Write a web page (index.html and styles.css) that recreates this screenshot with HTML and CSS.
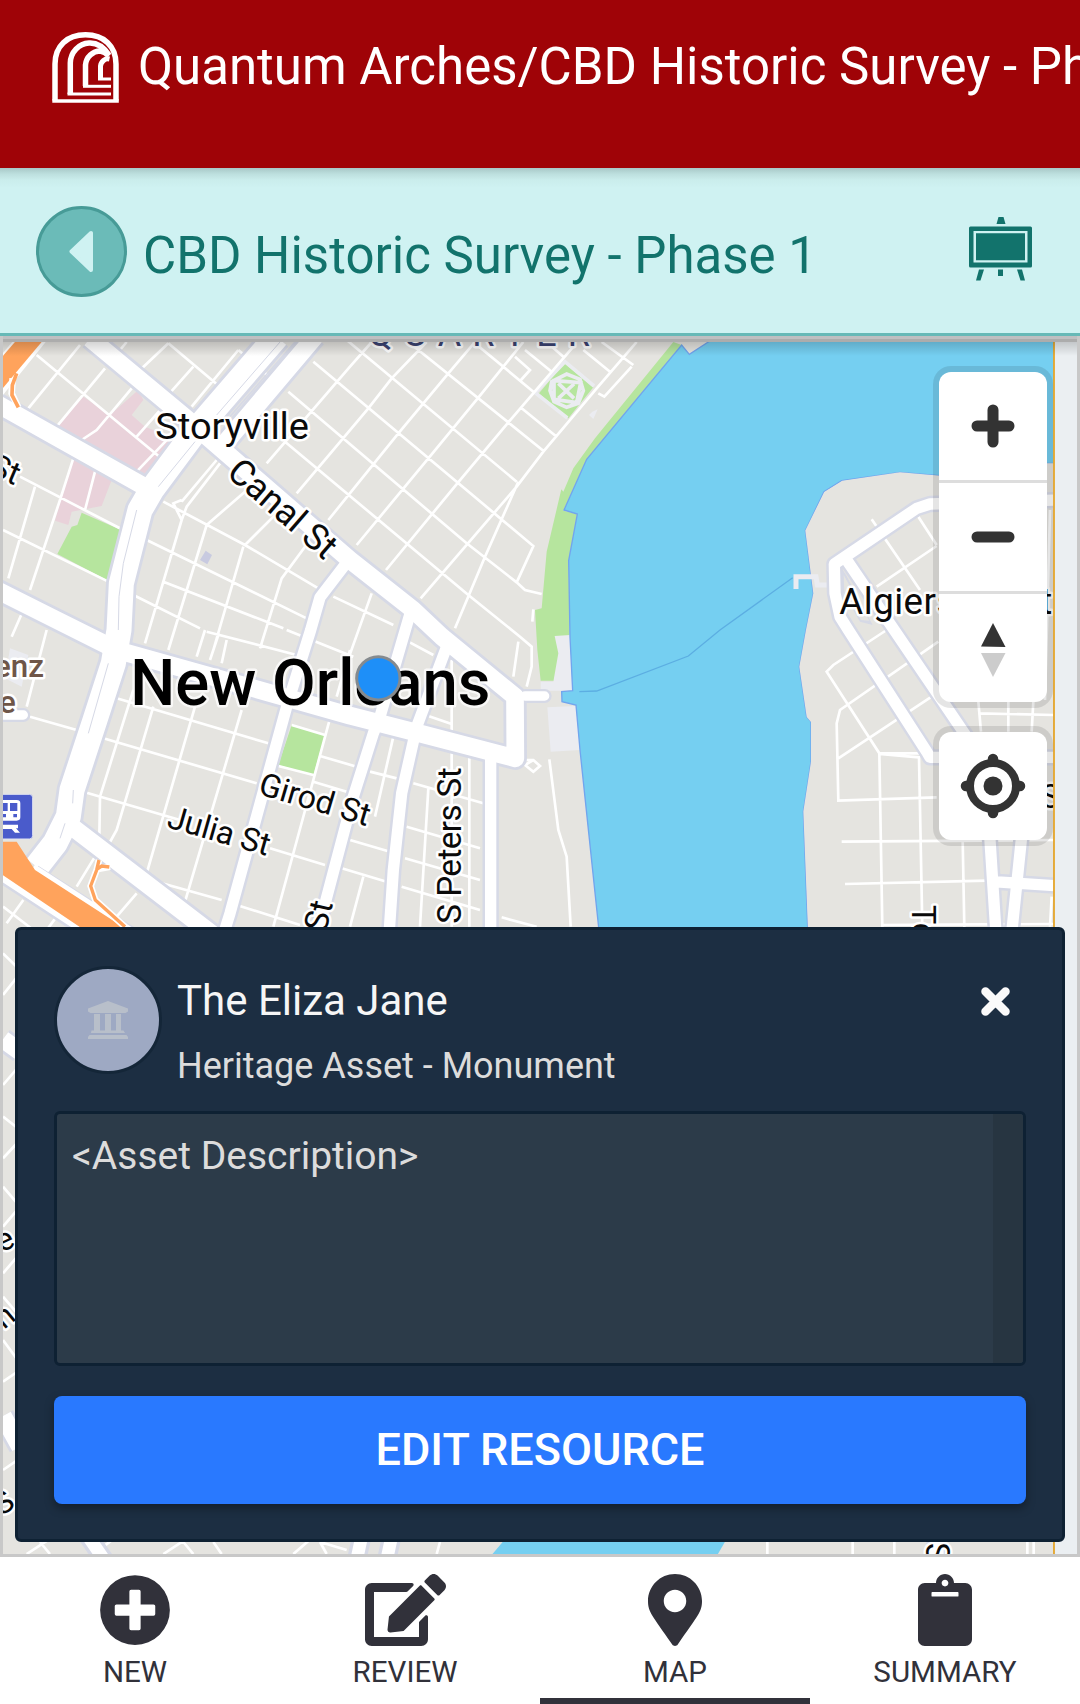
FILE: index.html
```html
<!DOCTYPE html>
<html lang="en">
<head>
<meta charset="utf-8">
<title>Quantum Arches</title>
<link rel="stylesheet" href="styles.css">
</head>
<body>
<div class="app">
  <header class="app-header">
    <svg class="logo" viewBox="0 0 67 71" aria-hidden="true">
      <path d="M3 68.5V32C3 14 15 2.800 33.500 2.800S64 14 64 32V68.500" fill="none" stroke="#fff" stroke-width="5.500"/>
      <path d="M0.300 69h66.500" stroke="#fff" stroke-width="3.500"/>
      <g fill="none" stroke="#fff">
        <path d="M18.300 62V31C18.500 20 27 11.500 37 11C46 10.500 53 17 57 23" stroke-width="5.500"/>
        <path d="M15.500 62H59" stroke-width="3"/>
        <path d="M33.500 54V33C34 25 41 19 48 19C52 19.500 55 22 57 24" stroke-width="5.500"/>
        <path d="M31 54.300H59" stroke-width="3"/>
        <path d="M48.500 47V34C49 29.500 53 26 57.500 27" stroke-width="5"/>
        <path d="M46 47H59" stroke-width="3"/>
      </g>
    </svg>
    <h1 class="app-title">Quantum Arches/CBD Historic Survey - Phase 1</h1>
  </header>

  <div class="project-bar">
    <button class="back" aria-label="Back">
      <svg viewBox="0 0 25 42"><path d="M22 2.500v37L2.500 21z" fill="#cff2f2" stroke="#cff2f2" stroke-width="4" stroke-linejoin="round"/></svg>
    </button>
    <h2 class="project-title">CBD Historic Survey - Phase 1</h2>
    <svg class="easel" viewBox="0 0 63 64" fill="#12736c" aria-hidden="true">
      <path d="M29.500 0h5l2 7h-9z"/>
      <path fill-rule="evenodd" d="M1.500 9.500h60A1.500 1.500 0 0 1 63 11v38a1.500 1.500 0 0 1-1.500 1.500h-60A1.500 1.500 0 0 1 0 49V11a1.500 1.500 0 0 1 1.500-1.500zM4.500 14v31.500h54V14z"/>
      <path d="M7 16.200h49v27H7zM10 52.500h5L11.500 63.500H7zM29 52.500h5V59h-5zM48 52.500h5L56 63.500h-4.500z"/>
    </svg>
  </div>

  <main class="map">
    <svg class="map-canvas" viewBox="9 36 3222 3636" aria-label="Map of New Orleans">
      <defs>
        <clipPath id="tile"><path d="M9 36H3160V3672H9z"/></clipPath>
        <path id="avenue" d="M270 25L555 262L1050 690L1238 838L1325 920L1545 1100L1546 1285L1250 1208L1050 1157L760 1075L350 960L160 865L-20 775M-20 215L460 485M945 20L670 345M200 1478L640 1815M9 2128L60 2165M9 3258L60 3350"/>
        <path id="loyola" d="M830 20L590 298L456 478L420 540L364 760L357 900L340 1000L285 1170L216 1380L205 1460L165 1540L110 1610"/>
        <path id="street" d="M1040 698L960 802L932 900L860 1130L690 1750L665 1830M1232 845L1140 1160L1120 1210L1060 1400L970 1740L950 1810M1340 950L1250 1190L1205 1390L1180 1620L1168 1800M1472 1270V1800M3170 510L2790 522L2750 535L2503 702L2505 790L2520 860L2545 900L2780 1265L2790 1282H3170M2540 690L2910 1235M2968 1500L2988 1810M3067 1500L3035 1810M2980 1655L3180 1668"/>
        <path id="stub" d="M1575 1098H1634M-10 1155H70"/>
      </defs>
      <rect x="3160" width="80" height="3700" fill="#ebeff2"/>
      <g clip-path="url(#tile)">
        <rect width="3240" height="3700" fill="#e5e4e0"/>
        <path fill="#e9d2da" d="M250 200L330 255L415 180L430 210L395 255L435 290L535 330L435 455L225 355L170 290zM218 385L335 450L305 528L215 545L205 585L165 572z"/>
        <path fill="#b6e59e" d="M245 548L370 603L325 752L172 672L215 590L232 585zM875 1185L975 1215L940 1335L835 1305zM1693 100L1780 172L1705 265L1617 190zM2020 36L1785 325L1720 415L1690 485L1684 478L1640 665L1625 835L1605 840L1612 960L1622 1052H1660L1710 1080L1706 692L1732 552L1690 542L1760 388L2045 45zM1562 3636L1508 3672H1645z"/>
        <path fill="#ebecf1" d="M1664 918L1710 915L1718 1082H1622V1055H1660L1675 970zM1642 1132L1728 1128L1740 1260L1652 1265zM30 955L85 975L65 1070L15 1045zM1777 245L1793 238L1780 267L1767 255z"/>
        <path fill="#c8cae0" d="M617 662L636 675L622 703L600 690z"/>
        <path fill="#75cff1" stroke="#71a5ee" stroke-width="4" d="M2125 36L2068 73L2045 45L1760 388L1692 540L1732 552L1706 692L1710 920L1718 1082L1685 1085L1686 1115L1728 1125L1740 1260L1800 1830H2425L2423 1790L2410 1445L2433 1295V1175L2420 1160L2398 1010L2418 900L2440 790L2416 602L2472 485L2525 452L2700 427L2820 437L3000 400H3180V20H2150z"/>
        <path fill="none" stroke="#e5e4e0" stroke-width="6" d="M2427 1800L2413 1445L2436 1295V1175L2423 1160L2401 1010L2421 900L2443 790L2419 602L2475 488L2528 455L2700 430L2820 440L3000 403H3180"/>
        <path fill="#75cff1" d="M1513 3630L1475 3675H2152L2178 3630z"/>
        <path fill="none" stroke="#5caee2" stroke-width="4" d="M1738 1085L1790 1083L2065 978L2160 900L2378 743"/>
        <path fill="none" stroke="#ebecf1" stroke-width="15" d="M2388 777V740H2448L2452 765H2482"/>
        <g fill="none" stroke="#ebecf1" stroke-width="11">
          <path d="M1605 188L1695 95L1782 168M1605 188L1702 264"/>
          <path d="M1655 155L1700 132L1740 148L1750 182L1735 220L1700 232L1662 215L1650 182zM1662 152L1742 158L1730 218L1662 208zM1675 160L1722 205M1722 162L1675 205"/>
        </g>
        <path class="lane" d="M110 75L490 390M240 45L85 235M315 115L170 290M395 175L290 300L245 330M505 40L665 175M505 40L410 130M580 110L500 200M715 60L575 230M715 60L745 85M380 36L360 60M485 235L410 320M510 320L410 425M770 110L815 145
          M60 440L370 600M105 470L25 745M220 385L180 510L90 780M285 425L255 540M9 600L325 755M440 630L920 865M490 515L735 645L955 775M400 795L600 895M490 755L850 895M545 570L435 940M620 585L505 960M730 650L640 960M930 630L845 745L780 955M735 485L620 585M830 550L735 645M650 390L545 515M660 400L560 530L545 570L520 520L545 510M1000 800L1180 885M1115 790L1040 1000M70 840L35 920M140 900L80 1130
          M615 900L590 980M655 915L630 990M680 930L665 1000M620 905L890 975M860 900L1060 980M1050 960L1010 1100
          M1040 30L1550 455M940 95L1600 648L1550 757M865 185L1400 640L1550 757L1575 780L1625 792M855 335L1405 795L1560 920L1595 950V1010L1580 1070M1555 935L1540 1040M1600 838L1597 875M1225 36L1630 362M1420 36L1600 185M1565 235L1670 320M1640 36L1690 80M1805 36L1900 105M1750 60L1830 125
          M800 400L1050 110L1115 36M890 490L1105 235L1175 145L1280 36M985 570L1195 310L1345 130L1425 36M1070 645L1285 385L1435 203L1570 36M1158 720L1372 460L1525 277L1720 50M1262 805L1550 470L1630 365L1790 175L1910 36M1365 895L1455 680L1555 455M1545 80L1590 120L1563 150M1575 60L1655 125M1795 190L1813 200L1895 110"/>
        <path class="lane" d="M400 1080L300 1400L298 1520M460 1130L350 1500L325 1545M585 1130L440 1630M725 1140L555 1715M345 1103L805 1240M305 1223L770 1360M260 1388L540 1470M90 1160L230 1200M470 1655L665 1710M710 1725L900 1785M810 1555L975 1605M990 1165L940 1350L820 1790M875 1185L975 1215M835 1308L940 1335M940 1355L1040 1385M960 1278L1070 1310M1050 1530L1170 1565M1025 1615L1160 1655M410 1690L350 1760M285 1580L230 1670M9 1730L100 1800M70 1710L20 1780M170 1760L140 1800
          M1180 1220L1125 1460M1110 1325L1190 1345M1240 1360L1450 1420M1285 1375L1260 1790M1220 1490L1440 1555M1215 1585L1440 1650M1205 1670L1440 1740M1355 990V1790M1408 1275V1790M1225 935L1300 975M1285 1158L1355 1182M1090 1640L1050 1790M1648 1288L1675 1500L1700 1580L1712 1790M1505 1762L1610 1790M1570 1290H1600L1620 1308L1600 1325L1575 1305L1600 1290
          M2615 568L2760 780M2630 770L2810 648M2755 560L2810 645M2660 900L2500 1005L2480 1025L2638 1270H2760M2815 935L2520 1140L2510 1180L2515 1412L2810 1402M2795 1100L2515 1285M2638 1270L2647 1790M2638 1272L2757 1282L2767 1790M2525 1535L3170 1530M2535 1662L2960 1652M2888 1530L2893 1790M2647 1785L3160 1782M2935 1115L2943 1205M3025 1115V1205M3100 1115L3095 1205M2935 1150L3160 1155M3150 540L3135 1110M3155 1700L3150 1790
          M9 1870L60 1920M9 1995L60 1930M9 2265L60 2205M9 2360L60 2400M9 2485L60 2430M9 2570L60 2630M9 2690L60 2630M9 3030L60 3100M9 3155L60 3120M9 3420L60 3385M9 2830L60 2770M9 2900L60 2960
          M80 3672L160 3620M120 3636L150 3672M310 3650L350 3620M490 3672L570 3620M550 3636L580 3672M640 3636L665 3672M880 3672L940 3620M960 3636L1040 3660M980 3672L960 3636M1320 3636L1310 3672M2302 3636V3672M2558 3636V3672M2683 3636V3672M3082 3636V3672M3101 3636V3672"/>
        <g class="casing">
          <use href="#avenue" stroke-width="70"/><use href="#loyola" stroke-width="92"/><use href="#street" stroke-width="49"/><use href="#stub" stroke-width="42" stroke-linecap="round"/>
          <path d="M258 3610L320 3700M1085 3620L1070 3690M1175 3620L1160 3690M2808 3620V3690" stroke-width="58"/>
        </g>
        <g class="road">
          <use href="#avenue" stroke-width="53"/><use href="#loyola" stroke-width="75"/><use href="#street" stroke-width="34"/><use href="#stub" stroke-width="28" stroke-linecap="round"/>
          <path d="M258 3610L320 3700M1085 3620L1070 3690M1175 3620L1160 3690M2812 3620V3690" stroke-width="38"/>
        </g>
        <path fill="none" stroke="#d6d9e6" stroke-width="3" d="M840 36L650 255M585 335L475 470M410 540L370 700L357 800L355 900M325 1000L265 1210M220 1380L218 1420M195 1480L180 1525"/>
        <path fill="none" stroke="#d6d9e6" stroke-width="5" d="M885 36L690 260"/>
        <path fill="#d6d9e6" d="M2522 710L2538 735L2618 885L2580 875L2525 780z"/>
        <path fill="#e5e4e0" d="M2531 735L2608 872L2583 870L2533 785z"/>
        <path d="M0 80L50 20H150L-5 212z" fill="#fff"/>
        <path d="M0 88L50 30H130L0 185z" fill="#ffa35c"/>
        <path d="M38 145L35 190L55 232" fill="none" stroke="#fff" stroke-width="20"/>
        <path d="M50 130L37 165L36 195L55 232" fill="none" stroke="#ffa35c" stroke-width="11"/>
        <path d="M0 1650L260 1820M110 1615L400 1800" fill="none" stroke="#d6d9e6" stroke-width="18"/>
        <path d="M0 1640L260 1810M100 1612L390 1800" fill="none" stroke="#fff" stroke-width="20"/>
        <path d="M0 1535H50L105 1620L375 1795H245L0 1630z" fill="#ffa35c"/>
        <path d="M297 1590L290 1620L272 1668L286 1710L375 1790M290 1618L330 1610" fill="none" stroke="#fff" stroke-width="20"/>
        <path d="M297 1590L290 1620L272 1668L286 1710L375 1790M290 1618L305 1608L328 1611" fill="none" stroke="#ffa35c" stroke-width="10"/>
        <g>
          <rect x="-20" y="1393" width="118" height="134" rx="10" fill="#4a5bcb" stroke="#dfe2f2" stroke-width="3"/>
          <path fill="#fff" fill-rule="evenodd" d="M0 1410H50Q61 1410 61 1420V1462Q61 1472 50 1472H0zM0 1419V1443H23V1419zM30 1419V1443H52V1419zM40 1452V1462H51V1452zM0 1452V1462H18V1452zM0 1484H54V1495H48L60 1508H45L35 1497H0z"/>
        </g>
        <g class="labels">
          <text x="466" y="327" font-size="110" textLength="461" lengthAdjust="spacingAndGlyphs">Storyville</text>
          <text transform="translate(676 434) rotate(41)" font-size="108" textLength="394">Canal St</text>
          <text transform="translate(497 1491) rotate(16)" font-size="97" textLength="315">Julia St</text>
          <text transform="translate(771 1391) rotate(16.500)" font-size="97" textLength="343">Girod St</text>
          <text transform="translate(1384 1781) rotate(-90)" font-size="100" textLength="469">S Peters St</text>
          <text transform="translate(978 1809) rotate(-77)" font-size="99">St</text>
          <text transform="translate(-38 431) rotate(23)" font-size="97">St</text>
          <text x="2518" y="852" font-size="110" textLength="639">Algiers Point</text>
          <text transform="translate(2735 1725) rotate(90)" font-size="97">Te</text>
          <text x="3122" y="1435" font-size="97">S</text>
          <text transform="translate(4 2768) rotate(-25)" font-size="95">e</text>
          <text transform="translate(12 3000) rotate(-40)" font-size="95">n</text>
          <text transform="translate(4 3560) rotate(-35)" font-size="95">S</text>
          <text transform="translate(2850 3697) rotate(-90)" font-size="97">S</text>
          <text class="district" x="1104" y="48" font-size="108" textLength="666">QUARTER</text>
          <text class="poi" x="132" y="1040" font-size="94" text-anchor="end">enz</text>
          <text class="poi" x="47" y="1150" font-size="94" text-anchor="end">e</text>
          <text class="city" x="391" y="1125" font-size="194" textLength="1080" lengthAdjust="spacingAndGlyphs">New Orleans</text>
        </g>
        <circle cx="1135" cy="1045" r="65" fill="#1e8ff8" stroke="#858a8e" stroke-width="9"/>
      </g>
      <path d="M3162 36V3672" stroke="#e5a01b" stroke-width="5"/>
    </svg>

    <div class="controls">
      <div class="control-group">
        <button aria-label="Zoom in"><svg viewBox="0 0 108 108"><path d="M38 54h32M54 38v32" stroke="#333" stroke-width="11" stroke-linecap="round"/></svg></button>
        <button aria-label="Zoom out"><svg viewBox="0 0 108 108"><path d="M38 54h32" stroke="#333" stroke-width="11" stroke-linecap="round"/></svg></button>
        <button aria-label="Reset north"><svg viewBox="0 0 108 108"><path d="M54 29L66.500 53L42 52.500z" fill="#333"/><path d="M42 59H66.500L54 83z" fill="#ccc"/></svg></button>
      </div>
      <div class="control-group">
        <button aria-label="Find my location"><svg viewBox="0 0 108 108"><circle cx="54" cy="54" r="23" fill="none" stroke="#333" stroke-width="8"/><circle cx="54" cy="54" r="9.500" fill="#333"/><path d="M54 27V29M54 79V81M27 54H29M79 54H81" stroke="#333" stroke-width="10.500" stroke-linecap="round"/></svg></button>
      </div>
    </div>

    <section class="card">
      <div class="card-head">
        <div class="avatar">
          <svg viewBox="0 0 40 38" fill="#b8bfca"><path d="M20 0L40 7.500V10.500L37.500 12H2.500L0 10.500V7.500zM6 13h6v16.500h5V13h6v16.500h5V13h5v16.500h2.500L37 32H3l.5-2.500H6zM1.500 34h37L40 36v2H0v-2z"/></svg>
        </div>
        <div class="card-text">
          <h3>The Eliza Jane</h3>
          <p>Heritage Asset - Monument</p>
        </div>
        <button class="close" aria-label="Close"><svg viewBox="0 0 29 29"><path d="M4.500 4.500l20 20M24.500 4.500l-20 20" stroke="#fafafa" stroke-width="8.500" stroke-linecap="round"/></svg></button>
      </div>
      <div class="description"><p>&lt;Asset Description&gt;</p><div class="track"></div></div>
      <button class="edit">EDIT RESOURCE</button>
    </section>
  </main>

  <nav class="tabs">
    <a class="tab"><svg viewBox="0 0 512 512"><path fill-rule="evenodd" d="M256 8a248 248 0 1 0 0 496a248 248 0 1 0 0-496zM400 284a12 12 0 0 1-12 12h-92v92a12 12 0 0 1-12 12h-56a12 12 0 0 1-12-12v-92h-92a12 12 0 0 1-12-12v-56a12 12 0 0 1 12-12h92v-92a12 12 0 0 1 12-12h56a12 12 0 0 1 12 12v92h92a12 12 0 0 1 12 12z"/></svg><span>NEW</span></a>
    <a class="tab"><svg viewBox="0 0 576 512"><path d="M402.600 83.200l90.200 90.200c3.800 3.800 3.800 10 0 13.800L274.400 405.600l-92.800 10.300c-12.400 1.400-22.900-9.100-21.500-21.500l10.300-92.800L388.800 83.200c3.800-3.800 10-3.800 13.800 0zm162-22.900l-48.800-48.800c-15.200-15.200-39.900-15.200-55.200 0l-35.400 35.400c-3.800 3.800-3.800 10 0 13.800l90.200 90.200c3.800 3.800 10 3.800 13.800 0l35.400-35.400c15.200-15.300 15.200-40 0-55.200zM384 346.200V448H64V128h229.800c3.200 0 6.200-1.300 8.500-3.500l40-40c7.600-7.600 2.200-20.500-8.500-20.500H48C21.500 64 0 85.500 0 112v352c0 26.500 21.500 48 48 48h352c26.500 0 48-21.500 48-48V306.200c0-10.700-12.900-16-20.500-8.500l-40 40c-2.200 2.300-3.500 5.300-3.500 8.500z"/></svg><span>REVIEW</span></a>
    <a class="tab active"><svg viewBox="0 0 384 512"><path d="M172.268 501.670C26.970 291.031 0 269.413 0 192 0 85.961 85.961 0 192 0s192 85.961 192 192c0 77.413-26.970 99.031-172.268 309.670-9.535 13.774-29.930 13.773-39.464 0zM192 272c44.183 0 80-35.817 80-80s-35.817-80-80-80-80 35.817-80 80 35.817 80 80 80z"/></svg><span>MAP</span></a>
    <a class="tab"><svg viewBox="0 0 384 512"><path d="M384 112v352c0 26.500-21.500 48-48 48H48c-26.500 0-48-21.500-48-48V112c0-26.500 21.500-48 48-48h80c0-35.300 28.700-64 64-64s64 28.700 64 64h80c26.500 0 48 21.500 48 48zM192 40c-13.300 0-24 10.700-24 24s10.700 24 24 24 24-10.700 24-24-10.700-24-24-24m96 114v-20a6 6 0 0 0-6-6H102a6 6 0 0 0-6 6v20a6 6 0 0 0 6 6h180a6 6 0 0 0 6-6z"/></svg><span>SUMMARY</span></a>
  </nav>
</div>
</body>
</html>
```

FILE: styles.css
```css
* { box-sizing: border-box; }
body { margin: 0; font-family: Roboto, "Liberation Sans", sans-serif; }
h1, h2, h3, p { margin: 0; font-weight: 400; white-space: nowrap; }
button { border: 0; padding: 0; margin: 0; font: inherit; background: none; }
svg { display: block; }

.app { width: 1080px; height: 1704px; display: flex; flex-direction: column; overflow: hidden; }

.app-header {
  height: 168px; flex: none; display: flex; align-items: flex-start;
  padding: 32px 0 0 52px; gap: 19px; overflow: hidden;
  background: #9f0307; color: #fff;
}
.logo { width: 67px; height: 71px; flex: none; }
.app-title { font-size: 51px; line-height: 60px; margin-top: 5px; }

.project-bar {
  height: 168px; flex: none; display: flex; align-items: center;
  padding: 1px 48px 0 36px; gap: 16px;
  background: linear-gradient(#a8c8c7, #bddfde 6px, #caedec 12px, #cff2f2 20px);
  border-bottom: 3px solid #67b9b7; color: #12736c;
}
.back {
  width: 91px; height: 91px; flex: none; border-radius: 50%;
  border: 3px solid #479b97; background: #6bbbb8;
  display: flex; align-items: center; justify-content: center;
}
.back svg { width: 25px; height: 43px; }
.project-title { font-size: 51px; line-height: 60px; margin-top: 9px; flex: 1; }
.easel { width: 63px; height: 64px; margin-top: -5px; }

.map {
  position: relative; height: 1221px; flex: none;
  padding-top: 3px; background: #bfbfc1;
  border: 3px solid #c8c8c8; border-width: 0 3px 3px;
}
.map-canvas { width: 1074px; height: 1215px; padding-top: 3px; background: #acacac; }
.map::after {
  content: ""; position: absolute; left: 0; right: 0; top: 6px; height: 14px;
  background: linear-gradient(rgba(0,0,0,.17), rgba(0,0,0,0));
}
.lane { fill: none; stroke: #fff; stroke-width: 8; }
.casing { fill: none; stroke: #d6d9e6; stroke-linejoin: round; }
.road { fill: none; stroke: #fff; stroke-linejoin: round; }
.labels { fill: #0a0a0a; stroke: #fff; stroke-width: 15; stroke-linejoin: round; paint-order: stroke; }
.labels .district { fill: #3b4372; }
.labels .poi { fill: #6f5648; font-weight: 500; }
.labels .city { fill: #000; font-weight: 500; stroke-opacity: .75; }

.controls { position: absolute; top: 36px; left: 936px; display: grid; gap: 30px; z-index: 1; }
.control-group { width: 108px; border-radius: 12px; background: #fff; box-shadow: 0 0 0 6px rgba(0,0,0,.1); }
.control-group button { display: block; width: 108px; }
.control-group button + button { border-top: 3px solid #ddd; }
.control-group svg { width: 108px; height: 108px; }

.card {
  position: absolute; left: 12px; top: 591px; width: 1050px; height: 615px; z-index: 1;
  padding: 36px; border: 3px solid #0e2133; border-radius: 6px; background: #1c2e42;
}
.card-head { height: 145px; display: flex; }
.avatar {
  width: 108px; height: 108px; flex: none; border-radius: 50%;
  border: 3px solid #142638; background: #9ea9c3;
  display: flex; align-items: center; justify-content: center;
}
.avatar svg { width: 40px; height: 38px; }
.card-text { margin-left: 15px; flex: 1; }
.card-text h3 { font-size: 42px; line-height: 50px; color: #f6f6f6; margin-top: 10px; }
.card-text p { font-size: 36px; line-height: 42px; color: #dcdcdc; margin-top: 19px; }
.close { width: 29px; height: 29px; margin: 21px 16px 0 0; }
.description {
  height: 255px; display: flex; justify-content: space-between;
  border: 3px solid #0e2133; border-radius: 6px; background: #2c3b49; overflow: hidden;
}
.description p { padding: 19px 0 0 15px; font-size: 39px; line-height: 46px; color: #dcdcdc; }
.track { width: 30px; background: #273541; }
.edit {
  display: block; width: 972px; height: 108px; margin-top: 30px; padding-bottom: 2px; border-radius: 8px;
  background: #2979ff; color: #fff; font-size: 45px; font-weight: 500;
  box-shadow: 0 4px 10px rgba(0,0,0,.35);
}

.tabs { height: 147px; flex: none; display: grid; grid-template-columns: repeat(4, 1fr); background: #fff; }
.tab {
  display: flex; flex-direction: column; align-items: center;
  padding-top: 17px; color: #31313a; border-bottom: 6px solid transparent;
}
.tab.active { border-bottom-color: #31313a; }
.tab svg { height: 72px; fill: currentColor; }
.tab span { font-size: 29.6px; line-height: 34px; margin-top: 9px; }
```
